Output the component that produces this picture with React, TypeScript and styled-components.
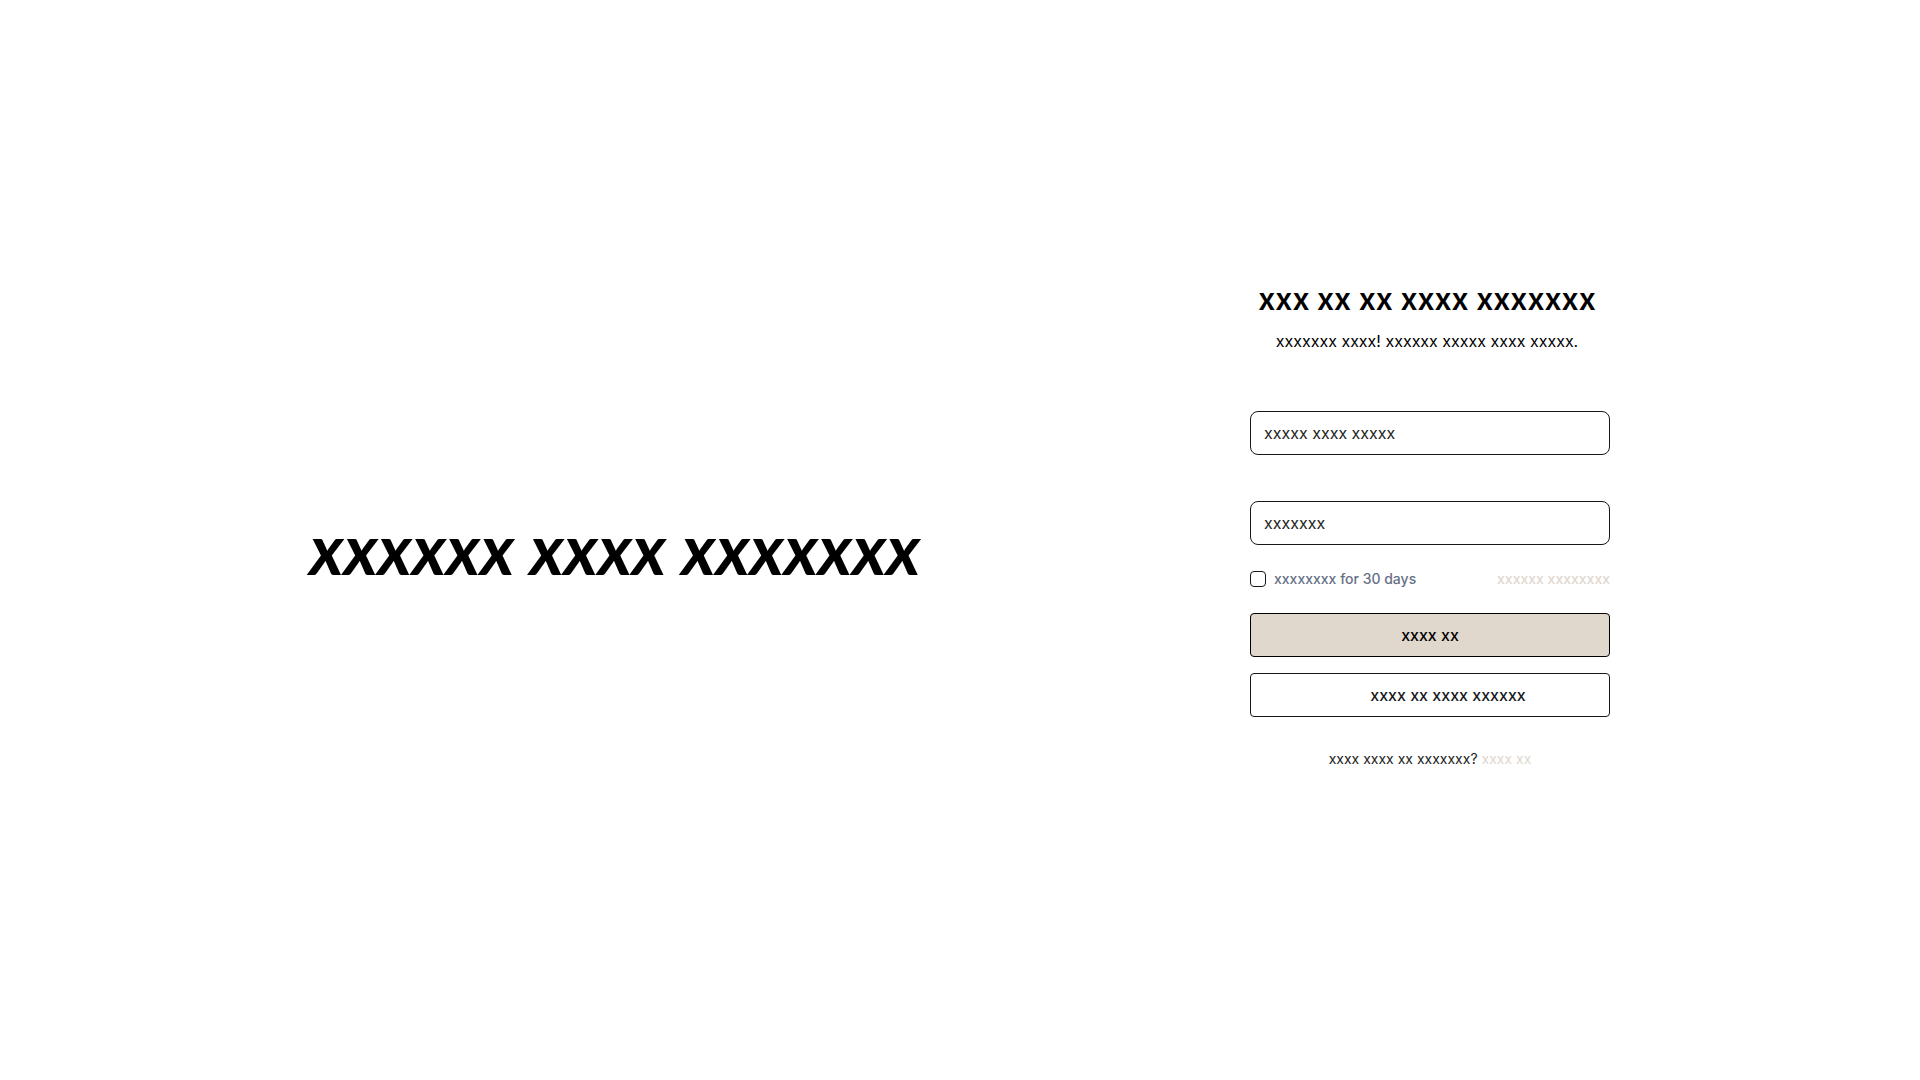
import React from "react";
import styled, { createGlobalStyle } from "styled-components";

const GlobalStyle = createGlobalStyle`
  *, *::before, *::after { box-sizing: border-box; }
  body {
    margin: 0;
    background: #fff;
    color: #000;
    font-family: Inter, "Liberation Sans", sans-serif;
  }
`;

const Page = styled.main`
  display: grid;
  grid-template-columns: minmax(0, 1fr) 360px;
  gap: 20px;
  align-items: center;
  min-height: 100vh;
  padding-right: 310px;

  @media (max-width: 1400px) {
    padding-right: 40px;
  }

  @media (max-width: 900px) {
    grid-template-columns: minmax(0, 360px);
    justify-content: center;
    padding: 40px 20px;
  }
`;

const Brand = styled.h1`
  margin: 0;
  padding-top: 16px;
  text-align: center;
  font-family: Lato, "Liberation Sans", sans-serif;
  font-size: 70px;
  line-height: 84px;
  font-style: italic;
  font-weight: 700;
`;

const Panel = styled.form`
  display: flex;
  flex-direction: column;
  padding-bottom: 30px;
`;

const Header = styled.header`
  display: flex;
  flex-direction: column;
  gap: 12px;
  margin-bottom: 58px;
  padding-right: 6px;
  text-align: center;
`;

const Title = styled.h2`
  margin: 0;
  font-size: 30px;
  line-height: 36px;
  font-weight: 600;
`;

const Subtitle = styled.p`
  margin: 0;
  font-size: 16px;
  line-height: 24px;
`;

const Fields = styled.div`
  display: flex;
  flex-direction: column;
  gap: 46px;
`;

const Field = styled.input`
  width: 100%;
  height: 44px;
  padding: 0 13px;
  border: 1px solid #16181d;
  border-radius: 8px;
  background: #fff;
  font-family: inherit;
  font-size: 16px;
  line-height: 24px;
  color: #222;

  &::placeholder {
    color: #222;
    opacity: 1;
  }
`;

const Options = styled.div`
  display: flex;
  align-items: center;
  justify-content: space-between;
  margin: 24px 0;
  font-size: 14px;
  line-height: 20px;
  font-weight: 500;
`;

const Remember = styled.label`
  display: flex;
  align-items: center;
  gap: 8px;
  color: #667085;
`;

const Checkbox = styled.input`
  appearance: none;
  width: 16px;
  height: 16px;
  margin: 0;
  border: 1px solid #16181d;
  border-radius: 4px;
  background: #fff;

  &:checked {
    background: #16181d;
  }
`;

const Link = styled.a`
  color: #e0d7cd;
  text-decoration: none;
`;

const Actions = styled.div`
  display: flex;
  flex-direction: column;
  gap: 16px;
`;

const Button = styled.button<{ $primary?: boolean }>`
  display: flex;
  align-items: center;
  justify-content: center;
  gap: 12px;
  height: 44px;
  border: 1px solid ${(p) => (p.$primary ? "#000" : "#16181d")};
  border-radius: 4px;
  background: ${(p) => (p.$primary ? "#e0d7cd" : "#fff")};
  color: ${(p) => (p.$primary ? "#000" : "#16181d")};
  font-family: inherit;
  font-size: 16px;
  line-height: 24px;
  font-weight: 500;
  cursor: pointer;
`;

const IconSlot = styled.span`
  width: 24px;
  height: 24px;
`;

const Footer = styled.p`
  margin: 32px 0 0;
  text-align: center;
  font-size: 14px;
  line-height: 20px;
  color: #222;
`;

export default function App() {
  return (
    <>
      <GlobalStyle />
      <Page>
        <Brand>xxxxxx xxxx xxxxxxx</Brand>
        <Panel onSubmit={(e) => e.preventDefault()}>
          <Header>
            <Title>xxx xx xx xxxx xxxxxxx</Title>
            <Subtitle>xxxxxxx xxxx! xxxxxx xxxxx xxxx xxxxx.</Subtitle>
          </Header>
          <Fields>
            <Field type="email" aria-label="xxxxx xxxx xxxxx" placeholder="xxxxx xxxx xxxxx" />
            <Field type="password" aria-label="xxxxxxx" placeholder="xxxxxxx" />
          </Fields>
          <Options>
            <Remember>
              <Checkbox type="checkbox" />
              xxxxxxxx for 30 days
            </Remember>
            <Link href="#">xxxxxx xxxxxxxx</Link>
          </Options>
          <Actions>
            <Button type="submit" $primary>xxxx xx</Button>
            <Button type="button">
              <IconSlot aria-hidden="true" />
              xxxx xx xxxx xxxxxx
            </Button>
          </Actions>
          <Footer>
            xxxx xxxx xx xxxxxxx? <Link href="#">xxxx xx</Link>
          </Footer>
        </Panel>
      </Page>
    </>
  );
}
